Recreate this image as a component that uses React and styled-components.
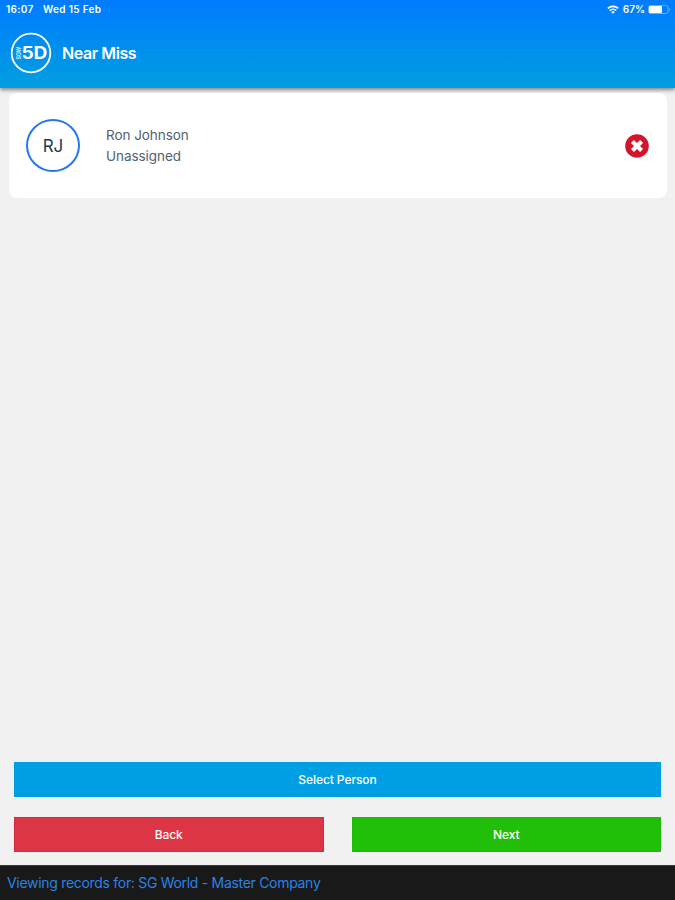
import React from "react";
import styled, { createGlobalStyle } from "styled-components";

export default function App() {
  return (
    <>
      <GlobalStyle />
      <Screen>
        <Header>
          <StatusBar>
            <StatusGroup>
              <Time>16:07</Time>
              <Day>Wed 15 Feb</Day>
            </StatusGroup>
            <StatusGroup>
              <WifiIcon />
              <Percent>67%</Percent>
              <BatteryIcon />
            </StatusGroup>
          </StatusBar>
          <TitleBar>
            <Logo />
            <Title>Near Miss</Title>
          </TitleBar>
        </Header>
        <Content>
          <PersonCard>
            <Avatar>RJ</Avatar>
            <Details>
              <div>Ron Johnson</div>
              <div>Unassigned</div>
            </Details>
            <RemoveButton aria-label="Remove person">
              <RemoveIcon />
            </RemoveButton>
          </PersonCard>
        </Content>
        <Actions>
          <Button $color="#009fe3">Select Person</Button>
          <ButtonRow>
            <Button $color="#dc3545" $edge="#d72940">Back</Button>
            <Button $color="#22bf0a" $edge="#1dbb06">Next</Button>
          </ButtonRow>
        </Actions>
        <Footer>Viewing records for: SG World - Master Company</Footer>
      </Screen>
    </>
  );
}

const WifiIcon = () => (
  <svg width="12" height="9" viewBox="0 0 12 9" fill="none" stroke="#fff" strokeWidth="1.7">
    <path d="M0.8 3.4C3.8 0.6 8.2 0.6 11.2 3.4" />
    <path d="M2.8 5.6C4.6 3.9 7.4 3.9 9.2 5.6" />
    <path d="M6 8.8L4.2 7C5.2 6.1 6.8 6.1 7.8 7Z" fill="#fff" stroke="none" />
  </svg>
);

const BatteryIcon = () => (
  <svg width="23" height="9" viewBox="0 0 23 9" fill="none">
    <rect x="0.5" y="0.5" width="19.5" height="8" rx="2" stroke="#fff" strokeOpacity="0.4" />
    <rect x="1" y="1" width="13" height="7" rx="1" fill="#fff" />
    <path d="M21.2 3V6C22.2 5.6 22.2 3.4 21.2 3Z" fill="#fff" fillOpacity="0.5" />
  </svg>
);

const Logo = () => (
  <svg width="42" height="42" viewBox="0 0 42 42">
    <circle cx="21" cy="21" r="19.3" fill="none" stroke="#fff" strokeWidth="1.8" />
    <text
      transform="translate(11.2 27.6) rotate(-90)"
      fill="#fff"
      fillOpacity="0.8"
      fontFamily="Inter, sans-serif"
      fontWeight="700"
      fontSize="6.5"
      textLength="13"
      lengthAdjust="spacingAndGlyphs"
    >
      SGW
    </text>
    <text
      x="11.4"
      y="27.2"
      fill="#fff"
      fontFamily="Inter, sans-serif"
      fontWeight="700"
      fontSize="17"
      textLength="26"
      lengthAdjust="spacingAndGlyphs"
    >
      5D
    </text>
  </svg>
);

const RemoveIcon = () => (
  <svg width="24" height="24" viewBox="0 0 24 24">
    <circle cx="12" cy="12" r="11.8" fill="#d4142c" />
    <path d="M7.4 7.4L16.6 16.6M16.6 7.4L7.4 16.6" stroke="#fff" strokeWidth="4.2" />
  </svg>
);

const GlobalStyle = createGlobalStyle`
  * {
    box-sizing: border-box;
  }
  body {
    margin: 0;
    font-family: Inter, "Liberation Sans", sans-serif;
  }
`;

const Screen = styled.div`
  display: flex;
  flex-direction: column;
  height: 100vh;
  background-color: #f1f1f1;
  overflow: hidden;
`;

const Header = styled.header`
  height: 88px;
  flex-shrink: 0;
  background: linear-gradient(#007bff, #009fe0);
  box-shadow: 0 2px 4px rgba(0, 0, 0, 0.45);
  color: #fff;
`;

const StatusBar = styled.div`
  display: flex;
  justify-content: space-between;
  height: 18px;
  padding: 0 4px 0 6px;
  font-size: 10px;
  font-weight: 600;
`;

const StatusGroup = styled.div`
  display: flex;
  align-items: center;
`;

const Time = styled.span`
  width: 37px;
  letter-spacing: 0.3px;
`;

const Day = styled.span`
  letter-spacing: 0.33px;
`;

const Percent = styled.span`
  margin: 0 3px 0 4px;
`;

const TitleBar = styled.div`
  display: flex;
  align-items: center;
  height: 70px;
  padding-left: 10px;
  gap: 10px;
`;

const Title = styled.h1`
  margin: 0;
  font-size: 16px;
  font-weight: 600;
  letter-spacing: -0.4px;
`;

const Content = styled.main`
  flex: 1;
  padding: 5px 8px 0 9px;
`;

const PersonCard = styled.div`
  display: flex;
  align-items: center;
  height: 105px;
  padding: 0 18px 0 17px;
  border-radius: 8px;
  background-color: #fff;
  position: relative;
`;

const Avatar = styled.div`
  display: flex;
  align-items: center;
  justify-content: center;
  width: 54px;
  height: 53px;
  border: 2px solid #2476f0;
  border-radius: 50%;
  color: #173b52;
  font-size: 17px;
`;

const Details = styled.div`
  flex: 1;
  margin-left: 26px;
  color: #526170;
  font-size: 13.5px;
  line-height: 21px;
  letter-spacing: -0.05px;
`;

const RemoveButton = styled.button`
  display: flex;
  padding: 0;
  border: 0;
  background: none;
  cursor: pointer;
`;

const Actions = styled.div`
  display: flex;
  flex-direction: column;
  gap: 20px;
  padding: 0 14px 13px;
`;

const ButtonRow = styled.div`
  display: flex;
  gap: 28px;
`;

const Button = styled.button`
  flex: 1 0 auto;
  width: 0;
  min-width: 0;
  height: 35px;
  padding: 0;
  border: 1px solid ${(props) => props.$edge || props.$color};
  background-color: ${(props) => props.$color};
  color: #fff;
  font-family: inherit;
  font-size: 12px;
  font-weight: 500;
  letter-spacing: -0.08px;
  cursor: pointer;

  ${Actions} > & {
    width: 100%;
  }
`;

const Footer = styled.footer`
  display: flex;
  align-items: center;
  height: 35px;
  padding: 0 7px 1px;
  border-top: 1px solid #3a3a3a;
  background-color: #191919;
  color: #2b83e6;
  font-size: 14px;
  letter-spacing: -0.3px;
`;
